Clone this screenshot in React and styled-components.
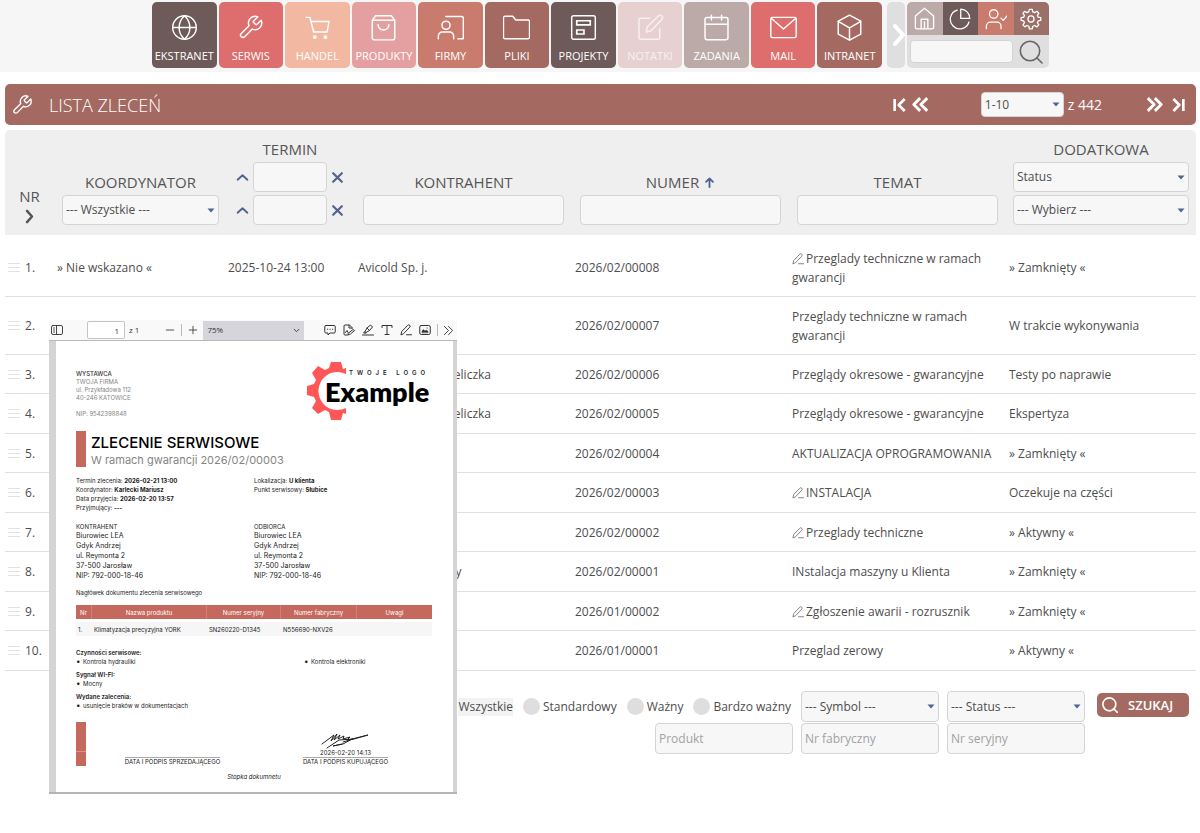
import React from "react";
import styled, { createGlobalStyle } from "styled-components";

const ui = '"Open Sans", "Noto Sans", sans-serif';
const brand = "#a46a62";
const blue = "#52628f";

const Global = createGlobalStyle`
  * { box-sizing: border-box; }
  body { margin: 0; background: #fff; color: #4d4d4d; font: 12px/18px ${ui}; }
  button, input, select { font: inherit; color: inherit; margin: 0; }
  button { border: 0; padding: 0; background: none; cursor: pointer; }
  a { color: inherit; text-decoration: none; }
`;

/* ---------- icons ---------- */

const Svg = styled.svg`
  display: block;
  flex: none;
  width: ${(p) => p.$w}px;
  height: ${(p) => p.$h || p.$w}px;
  fill: none;
  stroke: currentColor;
  stroke-width: ${(p) => p.$s || 1.4};
  stroke-linecap: round;
  stroke-linejoin: round;
`;

const SortIcon = styled(Svg)`
  color: ${blue};
`;

const wrench =
  "M14.8 6.2a1 1 0 0 0 0 1.4l1.6 1.6a1 1 0 0 0 1.4 0l3.7-3.7a6 6 0 0 1-7.9 7.9l-6.8 6.9a2.1 2.1 0 0 1-3-3l6.9-6.9a6 6 0 0 1 7.9-7.9z";

const paths = {
  globe: (
    <>
      <circle cx="12" cy="12" r="10.5" />
      <path d="M1.5 12h21M12 1.5c-6.4 6-6.4 15 0 21M12 1.5c6.4 6 6.4 15 0 21" />
    </>
  ),
  wrench: <path d={wrench} />,
  cart: (
    <>
      <path d="M2 3h3.2l3.4 13h12l1.6-9.4H6.2" />
      <circle cx="9.6" cy="20.6" r="1" fill="currentColor" />
      <circle cx="19" cy="20.6" r="1" fill="currentColor" />
    </>
  ),
  bag: (
    <>
      <path d="M2 5.5 5 1.6h14l3 3.9V21a2 2 0 0 1-2 2H4a2 2 0 0 1-2-2zM2 5.5h20" />
      <path d="M7.2 9.5a4.8 4.8 0 0 0 9.6 0" />
    </>
  ),
  firm: (
    <>
      <circle cx="8" cy="10" r="3.6" />
      <path d="M1.2 22v-2.5a3.5 3.5 0 0 1 3.5-3.5h6.6a3.5 3.5 0 0 1 3.5 3.5V22" />
      <path d="M7.8 2.2H22a1.4 1.4 0 0 1 1.4 1.4V22h-4.8" />
    </>
  ),
  folder: (
    <path d="M0.400 3.400a1.400 1.400 0 0 1 1.400-1.400h6.800l2.800 3.400h10.800a1.400 1.400 0 0 1 1.400 1.400v13.800a1.400 1.400 0 0 1-1.400 1.400H1.800a1.400 1.400 0 0 1-1.400-1.400z" />
  ),
  project: (
    <>
      <rect x="1.5" y="1.5" width="21" height="21" rx="1.6" />
      <path d="M6 6h12v3.600H6zM6 14.200h6.400v3.600H6z" strokeWidth="1.500" strokeLinejoin="miter" />
    </>
  ),
  note: (
    <>
      <path d="M11.5 3.8H3.2a1.4 1.4 0 0 0-1.4 1.4v15.9a1.4 1.4 0 0 0 1.4 1.4h15.6a1.4 1.4 0 0 0 1.4-1.4v-8" />
      <path d="m8.2 16 .8-4.4L19 1.8a2 2 0 0 1 3 3L12.5 14.900z" />
    </>
  ),
  calendar: (
    <>
      <rect x="1.8" y="3.2" width="20.4" height="19.6" rx="1.6" />
      <path d="M1.8 9.200h20.4M7.5 1v4.400M16.500 1v4.400" />
    </>
  ),
  mail: (
    <>
      <rect x="0.7" y="3" width="22.6" height="18" rx="1.4" />
      <path d="m1.400 4 10.600 9.400L22.600 4" />
    </>
  ),
  box: (
    <>
      <path d="M12 1 22 6.400v11.400L12 23.200 2 17.800V6.400z" />
      <path d="m2 6.600 10 5.700 10-5.700M12 12.300v10.700" />
    </>
  ),
  home: (
    <>
      <path d="M2.500 9.500 12 1.300l9.500 8.200V21a1.800 1.800 0 0 1-1.800 1.800H4.300A1.800 1.800 0 0 1 2.500 21z" />
      <path d="M8.500 22.500V12.800h7v9.700M12 15.500v7" />
    </>
  ),
  pie: (
    <>
      <path d="M9 2.300a10.400 10.400 0 1 0 12.800 13" />
      <path d="M12.800 1.200v10.200h9.800A10 10 0 0 0 12.800 1.200z" />
    </>
  ),
  userCheck: (
    <>
      <circle cx="9.500" cy="6.500" r="4.600" />
      <path d="M1.500 22.500V20a4.500 4.500 0 0 1 4.500-4.500h7a4.500 4.500 0 0 1 4.500 4.500v2.500M17.500 11l2.400 2.500 4.600-5.500" />
    </>
  ),
  gear: (
    <>
      <circle cx="12" cy="12" r="3.300" />
      <path d="m10.200 1.500-.7 2.800-2 .8L5 3.600 3.200 5.900l1.600 2.200-.8 2-2.800.4v3l2.800.6.8 2-1.600 2.300 2.100 2.200 2.300-1.500 2 .8.6 2.900h3.200l.6-2.900 2-.8 2.400 1.500 2.100-2.200-1.500-2.300.8-2 2.800-.6v-3l-2.800-.5-.8-2L20.500 5.800l-2.100-2.200L16 5.100l-2-.8-.6-2.800z" />
    </>
  ),
  search: (
    <>
      <circle cx="11" cy="11" r="9.700" />
      <path d="m18 18 5 5" />
    </>
  ),
  right: <path d="m8 3 8 9-8 9" />,
  up: <path d="m3 16 9-8 9 8" />,
  cross: <path d="M4 4l16 16M20 4 4 20" />,
  arrowUp: <path d="M12 22V3M4.500 10.500 12 3l7.500 7.500" />,
  first: <path d="M4 3v18M19 3l-9 9 9 9" strokeLinecap="butt" />,
  last: <path d="M20 3v18M5 3l9 9-9 9" strokeLinecap="butt" />,
  prev: <path d="m11.500 3-9 9 9 9M21.500 3l-9 9 9 9" strokeLinecap="butt" />,
  next: <path d="m2.500 3 9 9-9 9M12.500 3l9 9-9 9" strokeLinecap="butt" />,
  pen: <path d="m2 21 1.500-6L15.500 2.500a2.600 2.600 0 0 1 4 3.800L7.500 19zM13 21.500h10" />,
  sidebar: (
    <>
      <rect x="1" y="3" width="22" height="18" rx="3" />
      <path d="M11 3v18M5 8h2M5 12h2M5 16h2" />
    </>
  ),
  comment: (
    <>
      <path d="M4 3h16a2.500 2.500 0 0 1 2.500 2.500v10A2.500 2.500 0 0 1 20 18h-8l-4 4v-4H4a2.500 2.500 0 0 1-2.500-2.500v-10A2.500 2.500 0 0 1 4 3z" />
      <path d="M7 10.500h.5M12 10.500h.5M17 10.500h.5" />
    </>
  ),
  sign: (
    <>
      <path d="M10 22H4a2 2 0 0 1-2-2V4a2 2 0 0 1 2-2h9l5 5v2M12 2v6h6" />
      <path d="m11 18 9-7 3 2-8 7-4 1zM5 17l3-4 2 4" />
    </>
  ),
  marker: <path d="m6 15 4-7 7-6 4 4-6 7-7 4zM10 8l5 5M6 15l-3 3h5M1 22h22" />,
  text: <path d="M2 7V3h20v4M12 3v18M8 21h8" />,
  image: (
    <>
      <rect x="1.500" y="3" width="21" height="18" rx="3" />
      <path d="M6 17v-3l3-3 3 3 3-2 3 3v2z" fill="currentColor" strokeWidth="1" />
      <path d="M16 8h.5" />
    </>
  ),
  minus: <path d="M3 12h18" />,
  plus: <path d="M3 12h18M12 3v18" />,
  down: <path d="m4 8 8 8 8-8" />,
  more: <path d="m3 3 9 9-9 9M12 3l9 9-9 9" />,
};

const Icon = ({ name, w = 24, s }) => (
  <Svg viewBox="0 0 24 24" $w={w} $s={s} aria-hidden="true">
    {paths[name]}
  </Svg>
);

/* ---------- top navigation ---------- */

const TopBar = styled.header`
  display: flex;
  justify-content: center;
  height: 72px;
  padding: 2px 0 0 1px;
  background: #f6f6f6;
`;

const Tiles = styled.nav`
  display: grid;
  grid-template-columns: repeat(11, 1fr);
  gap: 2px;
  width: 730px;
  height: 66px;
`;

const Tile = styled.a`
  display: flex;
  flex-direction: column;
  align-items: center;
  justify-content: space-between;
  padding: 12px 0 4px;
  border-radius: 5px;
  background: ${(p) => p.$bg};
  color: ${(p) => p.$fg || "#fff"};
  font-size: 11px;
  line-height: 16px;
`;

const Expand = styled.button`
  display: grid;
  place-items: center;
  width: 18px;
  height: 66px;
  margin: 0 2px 0 5px;
  border-radius: 5px;
  background: #dfdfdf;
  color: #fff;
  overflow: hidden;
`;

const Quick = styled.div`
  width: 142px;
  height: 66px;
  border-radius: 5px;
  overflow: hidden;
  background: #dfdfdf;
`;

const QuickTiles = styled.div`
  display: grid;
  grid-template-columns: repeat(4, 1fr);
`;

const QuickTile = styled.button`
  display: grid;
  place-items: center;
  height: 33px;
  background: ${(p) => p.$bg};
  color: #fff;
`;

const QuickSearch = styled.form`
  display: flex;
  align-items: center;
  gap: 6px;
  height: 33px;
  padding: 0 6px 0 3px;
  color: #666;
`;

const Field = styled.input`
  display: block;
  width: 100%;
  min-width: 0;
  height: ${(p) => p.$h || 30}px;
  padding: 0 3px;
  border: 1px solid #d4d4d4;
  border-radius: 4px;
  background: #f7f7f7;
  font-size: 12px;
  font-weight: 400;
  &::placeholder { color: #a2a2a2; opacity: 1; }
`;

const nav = [
  ["EKSTRANET", "globe", "#6d5a59"],
  ["SERWIS", "wrench", "#dd6e6d"],
  ["HANDEL", "cart", "#f3b8a2"],
  ["PRODUKTY", "bag", "#e4a0a0"],
  ["FIRMY", "firm", "#c97c6d"],
  ["PLIKI", "folder", "#a46a62"],
  ["PROJEKTY", "project", "#6d5a59"],
  ["NOTATKI", "note", "#e7d1d0", "#f8f0f0"],
  ["ZADANIA", "calendar", "#bcaaa9"],
  ["MAIL", "mail", "#dd6e6d"],
  ["INTRANET", "box", "#a46a62"],
];

/* ---------- list title and pager ---------- */

const Main = styled.main`
  padding: 12px 4px 0 5px;
`;

const TitleBar = styled.div`
  display: flex;
  align-items: center;
  height: 41px;
  padding: 0 10px 0 6px;
  border-radius: 5px;
  background: ${brand};
  color: #fff;
`;

const Title = styled.h1`
  flex: 1;
  margin: 0 0 0 16px;
  font-size: 18px;
  line-height: 24px;
  font-weight: 300;
`;

const PagerGroup = styled.div`
  display: flex;
  gap: ${(p) => p.$gap}px;
`;

const PageRange = styled.label`
  display: flex;
  align-items: center;
  gap: 4px;
  margin: 0 44px 0 52px;
  font-size: 14px;
  white-space: nowrap;
`;

const SelectBox = styled.span`
  display: grid;
  align-items: center;
  width: ${(p) => p.$w || "100%"};
  & > * { grid-area: 1 / 1; }
  & > svg { justify-self: end; margin-right: 4px; pointer-events: none; }
`;

const NativeSelect = styled.select`
  appearance: none;
  width: 100%;
  height: ${(p) => p.$h}px;
  padding: 0 14px 0 3px;
  border: 1px solid #d4d4d4;
  border-radius: 4px;
  background: #f7f7f7;
  color: #4d4d4d;
  font-size: 12px;
  font-weight: 400;
`;

const Select = ({ value, h = 30, w, ...rest }) => (
  <SelectBox $w={w}>
    <NativeSelect $h={h} {...rest}>
      <option>{value}</option>
    </NativeSelect>
    <svg width="8" height="5" viewBox="0 0 8 5" aria-hidden="true">
      <path d="M0.500 0.500h7L4 4.500z" fill={blue} />
    </svg>
  </SelectBox>
);

/* ---------- orders table ---------- */

const Table = styled.table`
  width: 100%;
  margin-top: 5px;
  table-layout: fixed;
  border-collapse: separate;
  border-spacing: 0;
`;

const Col = styled.col`
  width: ${(p) => p.$w}px;
`;

const Head = styled.th`
  height: 105px;
  padding: 0 6px 10px 10px;
  background: #efefef;
  color: #555;
  font-size: 15px;
  line-height: 20px;
  font-weight: 400;
  text-align: center;
  vertical-align: bottom;
  &:first-child { padding: 0 0 11px 2px; border-radius: 5px 0 0 0; }
  &:nth-child(2) { padding-right: 4px; }
  &:last-child { padding: 0 7px 10px 9px; border-radius: 0 5px 0 0; }
`;

const HeadStack = styled.div`
  display: flex;
  flex-direction: column;
  align-items: center;
  gap: 3px;
`;

const HeadTitle = styled.label`
  display: flex;
  align-items: center;
  gap: 5px;
`;

const DateLine = styled.div`
  display: flex;
  align-items: center;
  gap: 4px;
  color: ${blue};
`;

const DateField = styled(Field)`
  width: 74px;
`;

const Body = styled.tbody`
  &::before { content: ""; display: block; height: 4px; }
`;

const Row = styled.tr`
  height: 39px;
  &:nth-child(even) { height: 40px; }
  &:nth-child(-n + 2) { height: 58px; }
`;

const Cell = styled.td`
  padding: 0 5px;
  border-bottom: 1px solid #e0e0e0;
  line-height: 19px;
  white-space: ${(p) => (p.$wrap ? "normal" : "nowrap")};
  & svg { display: inline-block; vertical-align: -2px; margin-right: 2px; color: #777; }
`;

const Ordinal = styled.div`
  display: flex;
  align-items: center;
  gap: 5px;
  margin-left: -2px;
`;

const Grip = styled.span`
  width: 12px;
  height: 9px;
  border: solid #e2e2e2;
  border-width: 1px 0;
  background: linear-gradient(#e2e2e2, #e2e2e2) center / 100% 1px no-repeat;
`;

const orders = [
  ["» Nie wskazano «", "2025-10-24 13:00", "Avicold Sp. j.", "2026/02/00008", "Przeglady techniczne w ramach gwarancji", "» Zamknięty «", true],
  ["", "", "", "2026/02/00007", "Przeglady techniczne w ramach gwarancji", "W trakcie wykonywania"],
  ["", "", "Kopalnia Soli - Wieliczka", "2026/02/00006", "Przeglądy okresowe - gwarancyjne", "Testy po naprawie"],
  ["", "", "Kopalnia Soli - Wieliczka", "2026/02/00005", "Przeglądy okresowe - gwarancyjne", "Ekspertyza"],
  ["", "", "", "2026/02/00004", "AKTUALIZACJA OPROGRAMOWANIA", "» Zamknięty «"],
  ["", "", "", "2026/02/00003", "INSTALACJA", "Oczekuje na części", true],
  ["", "", "", "2026/02/00002", "Przeglady techniczne", "» Aktywny «", true],
  ["", "", "Zakład Komunalny", "2026/02/00001", "INstalacja maszyny u Klienta", "» Zamknięty «"],
  ["", "", "", "2026/01/00002", "Zgłoszenie awarii - rozrusznik", "» Zamknięty «", true],
  ["", "", "", "2026/01/00001", "Przeglad zerowy", "» Aktywny «"],
];

/* ---------- bottom filters ---------- */

const Filters = styled.form`
  display: grid;
  grid-template-columns: 1fr 138px 138px 92px;
  column-gap: 8px;
  row-gap: 1px;
  padding: 20px 11px 0 0;
`;

const Radios = styled.div`
  display: flex;
  align-items: center;
  justify-content: flex-end;
  gap: 10px;
  padding-right: 2px;
`;

const RadioLabel = styled.label`
  display: flex;
  align-items: center;
  gap: 3px;
  & > span { background: ${(p) => (p.$on ? "#f3f3f3" : "none")}; }
`;

const Radio = styled.input`
  appearance: none;
  width: 17px;
  height: 17px;
  border-radius: 50%;
  background: #dedede;
`;

const SearchButton = styled.button`
  display: flex;
  align-items: center;
  gap: 10px;
  width: 92px;
  height: 24px;
  margin: 2px 0 0 4px;
  padding-left: 5px;
  border-radius: 5px;
  background: ${brand};
  color: #fff;
  font-size: 13px;
  font-weight: 600;
`;

const ProductField = styled(Field)`
  justify-self: end;
  width: 138px;
`;

const SearchSlot = styled.div`
  margin-right: -4px;
`;

/* ---------- document preview ---------- */

const Preview = styled.section`
  position: absolute;
  top: 320px;
  left: 49px;
  width: 408px;
  background: #d4d4d7;
  border-bottom: 2px solid #b4b4b6;
  font-family: Inter, "Open Sans", sans-serif;
  color: #222;
`;

const Tools = styled.div`
  display: flex;
  align-items: center;
  height: 21px;
  padding: 0 1px 0 2px;
  background: #f9f9fa;
  border-bottom: 1px solid #b8b8bc;
  color: #333;
  font: 8px/12px ${ui};
  white-space: nowrap;
`;

const ToolGroup = styled.div`
  display: flex;
  align-items: center;
  gap: ${(p) => p.$gap}px;
  margin-left: ${(p) => p.$left || 0}px;
`;

const PageInput = styled.input`
  width: 38px;
  height: 18px;
  padding: 0 5px;
  border: 1px solid #c4c4c8;
  border-radius: 2px;
  background: #fff;
  text-align: right;
`;

const Divider = styled.span`
  width: 1px;
  height: 12px;
  background: #b8b8bc;
`;

const ZoomBox = styled(SelectBox)`
  width: 101px;
  margin-left: 5px;
  select {
    appearance: none;
    height: 19px;
    padding: 0 4px;
    border: 0;
    background: #d5d5db;
  }
`;

const Page = styled.article`
  height: 451px;
  margin: 0 4px 0 7px;
  padding: 20px 21px 0 20px;
  background: #fff;
  font-size: 6px;
  line-height: 9px;
  & p { margin: 0; }
`;

const DocHead = styled.div`
  display: flex;
  justify-content: space-between;
  height: 70px;
`;

const Issuer = styled.address`
  padding-top: 9px;
  color: #858585;
  font-style: normal;
  line-height: 8px;
  & strong { color: #333; font-weight: 500; }
`;

const Logo = styled.svg`
  width: 122px;
  height: 60px;
  margin-right: 3px;
`;

const DocTitle = styled.div`
  height: 36px;
  padding-left: 5px;
  border-left: 10px solid #c5685d;
  & h2 { margin: 0; color: #000; font-size: 15px; line-height: 23px; font-weight: 500; }
  & p { color: #858585; font-size: 11px; line-height: 13px; }
`;

const Pair = styled.div`
  display: grid;
  grid-template-columns: 178px 1fr;
  margin-top: ${(p) => p.$top}px;
`;

const Party = styled.div`
  font-size: 7px;
  line-height: 10px;
  & h3 { margin: 0; font-size: 6px; line-height: 9px; font-weight: 400; }
`;

const Goods = styled.table`
  width: 100%;
  margin-top: 8px;
  table-layout: fixed;
  border-collapse: separate;
  border-spacing: 0;
  & th { height: 14px; padding: 0; background: #c5685d; color: #fff; font-weight: 400; border-right: 1px solid #cf8178; }
  & th:last-child { border: 0; }
  & td { height: 17px; padding: 0 2px; border-top: 3px solid #fff; background: #f6f6f6; white-space: nowrap; }
`;

const Tasks = styled.div`
  margin-top: ${(p) => p.$top}px;
  & h3 { margin: 0; font-size: 6px; line-height: 9px; font-weight: 600; }
  & ul { display: grid; grid-template-columns: 228px 1fr; margin: 0; padding: 0 0 0 7px; list-style: none; }
  & li::before { content: "•"; display: inline-block; width: 7px; margin-left: -7px; font-size: 8px; line-height: 6px; }
`;

const Signatures = styled.div`
  display: grid;
  grid-template-columns: 10px 1fr 1fr;
  align-items: end;
  justify-items: center;
  height: 44px;
  margin-top: 12px;
`;

const Stripe = styled.span`
  width: 10px;
  height: 44px;
  background: linear-gradient(#c5685d 29px, #d8958d 29px 30px, #c5685d 30px);
`;

const Signature = styled.div`
  display: grid;
  justify-items: center;
  line-height: 8px;
  & > span { border-top: 1px solid #aaa; white-space: nowrap; }
`;

const DocFoot = styled.p`
  padding-top: 6px;
  text-align: center;
  font-style: italic;
`;

const PartyBlock = ({ name }) => (
  <Party>
    <h3>{name}</h3>
    <p>Biurowiec LEA</p>
    <p>Gdyk Andrzej</p>
    <p>ul. Reymonta 2</p>
    <p>37-500 Jarosław</p>
    <p>NIP: 792-000-18-46</p>
  </Party>
);

function DocumentPreview() {
  return (
    <Preview aria-label="Podgląd dokumentu">
      <Tools>
        <button aria-label="Panel boczny"><Icon name="sidebar" w={12} s={1.800} /></button>
        <ToolGroup $gap={4} $left={24}>
          <PageInput aria-label="Strona" defaultValue="1" />
          <span>z 1</span>
        </ToolGroup>
        <ToolGroup $gap={6} $left={26}>
          <button aria-label="Pomniejsz"><Icon name="minus" w={10} s={2} /></button>
          <Divider />
          <button aria-label="Powiększ"><Icon name="plus" w={10} s={2} /></button>
        </ToolGroup>
        <ZoomBox>
          <select aria-label="Powiększenie"><option>75%</option></select>
          <Icon name="down" w={7} s={3} />
        </ZoomBox>
        <ToolGroup $gap={7} $left={20}>
          {["comment", "sign", "marker", "text", "pen", "image"].map((n) => (
            <button key={n} aria-label={n}><Icon name={n} w={12} s={2} /></button>
          ))}
        </ToolGroup>
        <ToolGroup $gap={5} $left={6}>
          <Divider />
          <button aria-label="Więcej"><Icon name="more" w={11} s={2} /></button>
        </ToolGroup>
      </Tools>
      <Page>
        <DocHead>
          <Issuer>
            <strong>WYSTAWCA</strong>
            <p>TWOJA FIRMA</p>
            <p>ul. Przykładowa 112</p>
            <p>40-246 KATOWICE</p>
            <br />
            <p>NIP: 9542398848</p>
          </Issuer>
          <Logo viewBox="0 0 122 60" role="img" aria-label="Twoje logo Example">
            <path
              fill="#ff5757"
              d="M24 1h10l2 7 3-1v6a19 19 0 1 0 0 34v6l-3-1-2 7H24l-2-8-4-2-7 4-6-6 4-7-2-4-7-2V25l7-2 2-4-4-7 6-7 7 4 4-2z"
            />
            <text x="42" y="14" fontSize="6" fontWeight="600" letterSpacing="4" fill="#222" fontFamily="Inter, sans-serif">TWOJE LOGO</text>
            <text x="18" y="41" fontSize="27" fontWeight="800" fill="#000" fontFamily="Lato, sans-serif">Example</text>
          </Logo>
        </DocHead>
        <DocTitle>
          <h2>ZLECENIE SERWISOWE</h2>
          <p>W ramach gwarancji 2026/02/00003</p>
        </DocTitle>
        <Pair $top={9}>
          <div>
            <p>Termin zlecenia: <b>2026-02-21 13:00</b></p>
            <p>Koordynator: <b>Karlecki Mariusz</b></p>
            <p>Data przyjęcia: <b>2026-02-20 13:57</b></p>
            <p>Przyjmujący: <b>---</b></p>
          </div>
          <div>
            <p>Lokalizacja: <b>U klienta</b></p>
            <p>Punkt serwisowy: <b>Słubice</b></p>
          </div>
        </Pair>
        <Pair $top={10}>
          <PartyBlock name="KONTRAHENT" />
          <PartyBlock name="ODBIORCA" />
        </Pair>
        <Tasks $top={7}>
          <p>Nagłówek dokumentu zlecenia serwisowego</p>
        </Tasks>
        <Goods>
          <colgroup>
            <Col $w={16} /><Col $w={115} /><Col $w={74} /><Col $w={76} /><Col />
          </colgroup>
          <thead>
            <tr><th>Nr</th><th>Nazwa produktu</th><th>Numer seryjny</th><th>Numer fabryczny</th><th>Uwagi</th></tr>
          </thead>
          <tbody>
            <tr><td>1.</td><td>Klimatyzacja precyzyjna YORK</td><td>SN260220-D1345</td><td>N556690-NXV26</td><td /></tr>
          </tbody>
        </Goods>
        <Tasks $top={12}>
          <h3>Czynności serwisowe:</h3>
          <ul><li>Kontrola hydrauliki</li><li>Kontrola elektroniki</li></ul>
        </Tasks>
        <Tasks $top={4}>
          <h3>Sygnał WI-FI:</h3>
          <ul><li>Mocny</li></ul>
        </Tasks>
        <Tasks $top={4}>
          <h3>Wydane zalecenia:</h3>
          <ul><li>usunięcie braków w dokumentacjach</li></ul>
        </Tasks>
        <Signatures>
          <Stripe />
          <Signature><span>DATA I PODPIS SPRZEDAJĄCEGO</span></Signature>
          <Signature>
            <Svg viewBox="0 0 48 17" $w={48} $h={17} $s={1} aria-hidden="true">
              <path d="M1 12 13 3l-3 6 6-7-3 6 6-5-2 4 6-3-1 3 7-2-3 3 7-1 14-4-16 4-9 5-10 2 9-2M6 16l12-8 14-1-10 3" />
            </Svg>
            2026-02-20 14:13
            <span>DATA I PODPIS KUPUJĄCEGO</span>
          </Signature>
        </Signatures>
        <DocFoot>Stopka dokumnetu</DocFoot>
      </Page>
    </Preview>
  );
}

export default function App() {
  return (
    <>
      <Global />
      <TopBar>
        <Tiles>
          {nav.map(([label, icon, bg, fg]) => (
            <Tile key={label} href="#" $bg={bg} $fg={fg}>
              <Icon name={icon} w={27} s={1.300} />
              {label}
            </Tile>
          ))}
        </Tiles>
        <Expand aria-label="Rozwiń"><Icon name="right" w={24} s={4} /></Expand>
        <Quick>
          <QuickTiles>
            <QuickTile $bg="#bcaaa9" aria-label="Start"><Icon name="home" w={23} /></QuickTile>
            <QuickTile $bg="#6d5a59" aria-label="Raporty"><Icon name="pie" w={22} /></QuickTile>
            <QuickTile $bg="#c97c6d" aria-label="Użytkownik"><Icon name="userCheck" w={22} /></QuickTile>
            <QuickTile $bg="#9b7068" aria-label="Ustawienia"><Icon name="gear" w={22} /></QuickTile>
          </QuickTiles>
          <QuickSearch>
            <Field $h={23} aria-label="Szukaj w systemie" />
            <button type="button" aria-label="Szukaj"><Icon name="search" w={24} s={1.600} /></button>
          </QuickSearch>
        </Quick>
      </TopBar>

      <Main>
        <TitleBar>
          <Icon name="wrench" w={22} s={1.500} />
          <Title>LISTA ZLECEŃ</Title>
          <PagerGroup $gap={4}>
            <button aria-label="Pierwsza"><Icon name="first" w={16} s={4} /></button>
            <button aria-label="Poprzednia"><Icon name="prev" w={17} s={4} /></button>
          </PagerGroup>
          <PageRange>
            <Select value="1-10" h={25} w="83px" />
            z 442
          </PageRange>
          <PagerGroup $gap={7}>
            <button aria-label="Następna"><Icon name="next" w={17} s={4} /></button>
            <button aria-label="Ostatnia"><Icon name="last" w={16} s={4} /></button>
          </PagerGroup>
        </TitleBar>

        <Table>
          <colgroup>
            <Col $w={47} /><Col $w={171} /><Col $w={130} /><col /><col /><col /><Col $w={192} />
          </colgroup>
          <thead>
            <tr>
              <Head>
                <HeadStack>NR<Icon name="right" w={15} s={4} /></HeadStack>
              </Head>
              <Head>
                <HeadStack>
                  <HeadTitle htmlFor="coord">KOORDYNATOR</HeadTitle>
                  <Select id="coord" value="--- Wszystkie ---" />
                </HeadStack>
              </Head>
              <Head>
                <HeadStack>
                  <HeadTitle htmlFor="date-from">TERMIN</HeadTitle>
                  <DateLine>
                    <Icon name="up" w={13} s={3.500} />
                    <DateField id="date-from" />
                    <Icon name="cross" w={13} s={4} />
                  </DateLine>
                  <DateLine>
                    <Icon name="up" w={13} s={3.500} />
                    <DateField aria-label="Termin do" />
                    <Icon name="cross" w={13} s={4} />
                  </DateLine>
                </HeadStack>
              </Head>
              <Head>
                <HeadStack>
                  <HeadTitle htmlFor="client">KONTRAHENT</HeadTitle>
                  <Field id="client" />
                </HeadStack>
              </Head>
              <Head>
                <HeadStack>
                  <HeadTitle htmlFor="number">
                    NUMER
                    <SortIcon viewBox="0 0 24 24" $w={11} $s={4} aria-hidden="true">{paths.arrowUp}</SortIcon>
                  </HeadTitle>
                  <Field id="number" />
                </HeadStack>
              </Head>
              <Head>
                <HeadStack>
                  <HeadTitle htmlFor="subject">TEMAT</HeadTitle>
                  <Field id="subject" />
                </HeadStack>
              </Head>
              <Head>
                <HeadStack>
                  <HeadTitle htmlFor="extra">DODATKOWA</HeadTitle>
                  <Select id="extra" value="Status" />
                  <Select aria-label="Wartość" value="--- Wybierz ---" />
                </HeadStack>
              </Head>
            </tr>
          </thead>
          <Body>
            {orders.map(([coord, date, client, number, subject, status, edited], i) => (
              <Row key={number}>
                <Cell><Ordinal><Grip />{i + 1}.</Ordinal></Cell>
                <Cell>{coord}</Cell>
                <Cell>{date}</Cell>
                <Cell>{client}</Cell>
                <Cell>{number}</Cell>
                <Cell $wrap={i < 2}>
                  {edited && <Icon name="pen" w={12} s={1.800} />}
                  {subject}
                </Cell>
                <Cell>{status}</Cell>
              </Row>
            ))}
          </Body>
        </Table>

        <Filters>
          <Radios>
            {["Wszystkie", "Standardowy", "Ważny", "Bardzo ważny"].map((label, i) => (
              <RadioLabel key={label} $on={i === 0}>
                <Radio type="radio" name="priority" />
                <span>{label}</span>
              </RadioLabel>
            ))}
          </Radios>
          <Select aria-label="Symbol" value="--- Symbol ---" h={31} />
          <Select aria-label="Status" value="--- Status ---" h={31} />
          <SearchSlot>
            <SearchButton type="button"><Icon name="search" w={16} s={2.500} />SZUKAJ</SearchButton>
          </SearchSlot>
          <ProductField $h={31} placeholder="Produkt" aria-label="Produkt" />
          <Field $h={31} placeholder="Nr fabryczny" aria-label="Nr fabryczny" />
          <Field $h={31} placeholder="Nr seryjny" aria-label="Nr seryjny" />
        </Filters>
      </Main>

      <DocumentPreview />
    </>
  );
}
